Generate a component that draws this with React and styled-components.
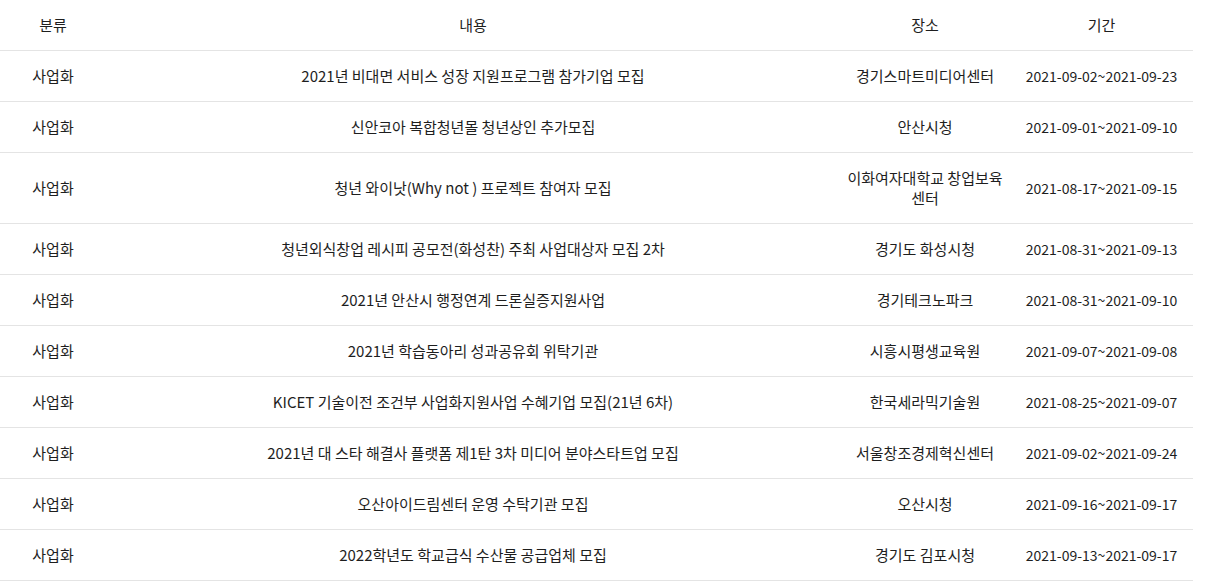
import styled, { createGlobalStyle } from "styled-components";

const GlobalStyle = createGlobalStyle`
  body {
    margin: 0;
    background: #fff;
    font-family: "Noto Sans CJK KR", "Noto Sans", sans-serif;
    color: #1e1e1e;
  }
`

const Board = styled.table`
  width: 1193px;
  border-collapse: collapse;
  table-layout: fixed;
  font-size: 15px;
  line-height: 20px;
`

const HeadCell = styled.th`
  width: ${props => props.$w}px;
  height: 50px;
  padding: 0 5px;
  font-weight: 400;
  text-align: center;
  border-bottom: 1px solid #e4e4e4;
  box-sizing: border-box;
`

const Cell = styled.td`
  padding: 15px 5px;
  text-align: center;
  vertical-align: middle;
  border-bottom: 1px solid #e4e4e4;
  word-break: keep-all;
  font-size: ${props => (props.$date ? "14px" : "15px")};
`

const rows = [
  ["2021년 비대면 서비스 성장 지원프로그램 참가기업 모집", "경기스마트미디어센터", "2021-09-02~2021-09-23"],
  ["신안코아 복합청년몰 청년상인 추가모집", "안산시청", "2021-09-01~2021-09-10"],
  ["청년 와이낫(Why not ) 프로젝트 참여자 모집", "이화여자대학교 창업보육 센터", "2021-08-17~2021-09-15"],
  ["청년외식창업 레시피 공모전(화성찬) 주최 사업대상자 모집 2차", "경기도 화성시청", "2021-08-31~2021-09-13"],
  ["2021년 안산시 행정연계 드론실증지원사업", "경기테크노파크", "2021-08-31~2021-09-10"],
  ["2021년 학습동아리 성과공유회 위탁기관", "시흥시평생교육원", "2021-09-07~2021-09-08"],
  ["KICET 기술이전 조건부 사업화지원사업 수혜기업 모집(21년 6차)", "한국세라믹기술원", "2021-08-25~2021-09-07"],
  ["2021년 대 스타 해결사 플랫폼 제1탄 3차 미디어 분야스타트업 모집", "서울창조경제혁신센터", "2021-09-02~2021-09-24"],
  ["오산아이드림센터 운영 수탁기관 모집", "오산시청", "2021-09-16~2021-09-17"],
  ["2022학년도 학교급식 수산물 공급업체 모집", "경기도 김포시청", "2021-09-13~2021-09-17"],
];

const App = () => {
  return (
    <>
      <GlobalStyle />
      <Board>
        <thead>
          <tr>
            <HeadCell $w={106}>분류</HeadCell>
            <HeadCell $w={734}>내용</HeadCell>
            <HeadCell $w={170}>장소</HeadCell>
            <HeadCell $w={183}>기간</HeadCell>
          </tr>
        </thead>
        <tbody>
          {rows.map((r, i) => (
            <tr key={i}>
              <Cell>사업화</Cell>
              <Cell>{r[0]}</Cell>
              <Cell>{r[1]}</Cell>
              <Cell $date>{r[2]}</Cell>
            </tr>
          ))}
        </tbody>
      </Board>
    </>
  );
}

export default App;
